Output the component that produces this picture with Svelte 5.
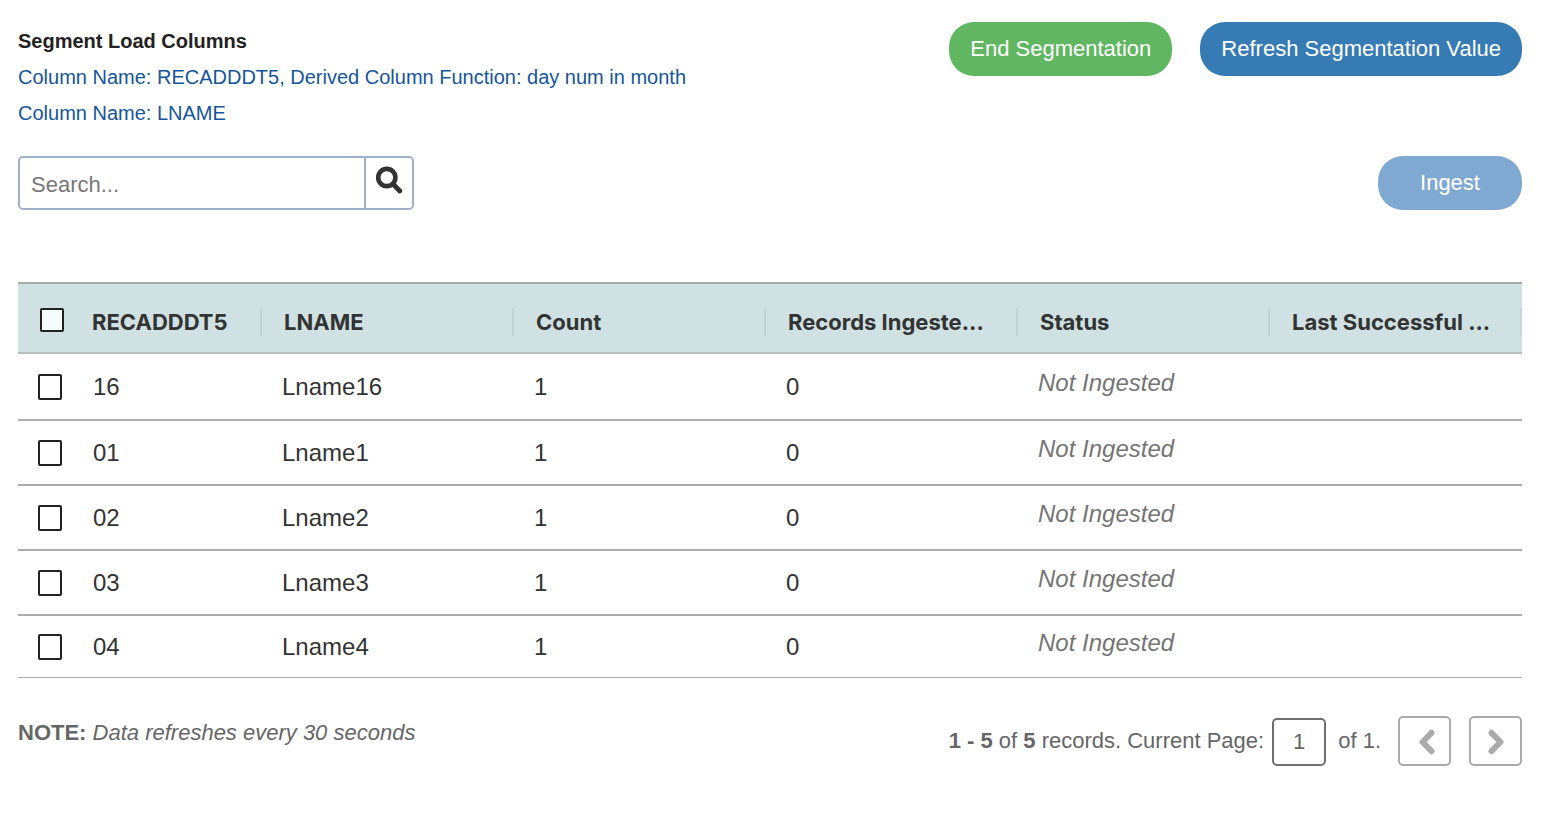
<script>
  const columns = ['LNAME', 'Count', 'Records Ingeste...', 'Status', 'Last Successful ...'];
  const rows = [
    { day: '16', name: 'Lname16', count: 1, ingested: 0, status: 'Not Ingested', last: '' },
    { day: '01', name: 'Lname1', count: 1, ingested: 0, status: 'Not Ingested', last: '' },
    { day: '02', name: 'Lname2', count: 1, ingested: 0, status: 'Not Ingested', last: '' },
    { day: '03', name: 'Lname3', count: 1, ingested: 0, status: 'Not Ingested', last: '' },
    { day: '04', name: 'Lname4', count: 1, ingested: 0, status: 'Not Ingested', last: '' }
  ];
  let search = $state('');
  let page = $state('1');
  let selected = $state(rows.map(() => false));

  function toggleAll(event) {
    selected = rows.map(() => event.currentTarget.checked);
  }
</script>

<main>
  <header class="top">
    <section class="segments">
      <h1>Segment Load Columns</h1>
      <p>Column Name: RECADDDT5, Derived Column Function: day num in month</p>
      <p>Column Name: LNAME</p>
    </section>
    <div class="actions">
      <button class="pill green">End Segmentation</button>
      <button class="pill">Refresh Segmentation Value</button>
    </div>
  </header>

  <div class="tools">
    <form class="search" onsubmit={(e) => e.preventDefault()}>
      <input type="text" placeholder="Search..." aria-label="Search" bind:value={search} />
      <button aria-label="Run search">
        <svg width="28" height="28" viewBox="0 0 28 28" fill="none" stroke="#333" aria-hidden="true">
          <circle cx="11.8" cy="11.5" r="8.6" stroke-width="4.6" />
          <path d="M18 18 L24.8 25" stroke-width="4.8" stroke-linecap="round" />
        </svg>
      </button>
    </form>
    <button class="pill ingest" disabled>Ingest</button>
  </div>

  <table>
    <colgroup>
      <col class="pick-col" />
      <col class="day-col" />
      {#each columns as column (column)}<col />{/each}
    </colgroup>
    <thead>
      <tr>
        <th class="pick"><input type="checkbox" aria-label="Select all rows" onchange={toggleAll} /></th>
        <th class="day"><span>RECADDDT5</span></th>
        {#each columns as column (column)}
          <th><span>{column}</span></th>
        {/each}
      </tr>
    </thead>
    <tbody>
      {#each rows as row, i (row.day)}
        <tr>
          <td class="pick"><input type="checkbox" aria-label={row.name} bind:checked={selected[i]} /></td>
          <td class="day">{row.day}</td>
          <td>{row.name}</td>
          <td>{row.count}</td>
          <td>{row.ingested}</td>
          <td class="status">{row.status}</td>
          <td>{row.last}</td>
        </tr>
      {/each}
    </tbody>
  </table>

  <footer>
    <p class="note"><strong>NOTE:</strong> <em>Data refreshes every 30 seconds</em></p>
    <div class="pager">
      <label for="page"><strong>1 - 5</strong> of <strong>5</strong> records. Current Page:</label>
      <input id="page" type="text" bind:value={page} />
      <span>of 1.</span>
      <div class="steps">
        <button aria-label="Previous page">
          <svg width="20" height="28" viewBox="0 0 20 28" aria-hidden="true"><path d="M16.5 5.8 L7.5 15 L16.5 24.2" /></svg>
        </button>
        <button aria-label="Next page">
          <svg width="20" height="28" viewBox="0 0 20 28" aria-hidden="true"><path d="M5.5 5.8 L14.5 15 L5.5 24.2" /></svg>
        </button>
      </div>
    </div>
  </footer>
</main>

<style>
  :global(body) {
    margin: 0;
    background: #fff;
  }
  main {
    padding: 22px 28px 48px 18px;
    font-family: 'Liberation Sans', Arial, sans-serif;
    font-size: 22px;
    color: #333;
  }
  h1,
  p {
    margin: 0;
  }
  button,
  input {
    box-sizing: border-box;
    margin: 0;
    font: inherit;
  }
  button {
    cursor: pointer;
  }
  .top,
  .tools,
  footer {
    display: flex;
    justify-content: space-between;
    align-items: flex-start;
  }
  .segments {
    padding-top: 1px;
    font-size: 20px;
    line-height: 36px;
    color: #15569a;
  }
  h1 {
    font-size: 20px;
    color: #222;
  }
  .actions {
    display: flex;
    gap: 28px;
  }
  .pill {
    height: 54px;
    padding: 0 21px;
    min-width: 144px;
    border: 0;
    border-radius: 25px;
    background: #377bb5;
    color: #fff;
    white-space: nowrap;
  }
  .green {
    background: #61b761;
  }
  .ingest {
    background: #7fa9d0;
    cursor: default;
  }
  .tools {
    margin-top: 25px;
  }
  .search {
    display: flex;
    box-sizing: border-box;
    width: 396px;
    height: 54px;
    border: 2px solid #9fb1c7;
    border-radius: 5px;
  }
  .search input {
    flex: 1;
    min-width: 0;
    padding: 4px 11px 0;
    border: 0;
    background: none;
    color: #333;
  }
  .search input::placeholder {
    color: #777;
    opacity: 1;
  }
  .search button {
    width: 48px;
    padding: 0 0 6px;
    border: 0;
    border-left: 2px solid #9fb1c7;
    background: none;
    display: grid;
    place-items: center;
  }
  table {
    width: 100%;
    margin-top: 72px;
    table-layout: fixed;
    border-spacing: 0;
  }
  .pick-col {
    width: 56px;
  }
  .day-col {
    width: 188px;
  }
  th,
  td {
    box-sizing: border-box;
    text-align: left;
    white-space: nowrap;
  }
  th {
    height: 72px;
    padding: 8px 0 0;
    border-top: 2px solid #a9abac;
    border-bottom: 2px solid #b9bfc1;
    background: #cfe1e3;
    font-family: Inter, Roboto, sans-serif;
    font-size: 22px;
    font-weight: 700;
  }
  th span {
    display: block;
    padding: 0 22px;
    border-right: 2px solid #c3d3d3;
    line-height: 28px;
  }
  th.day span {
    padding-left: 18px;
  }
  td {
    height: 65px;
    padding: 0 20px;
    border-bottom: 2px solid #adadad;
    font-size: 24px;
  }
  tbody tr:first-child td {
    height: 67px;
  }
  tbody tr:last-child td {
    height: 62px;
    border-bottom-width: 1px;
  }
  td.day {
    padding-left: 19px;
  }
  td.status {
    padding-bottom: 8px;
    font-style: italic;
    color: #757575;
  }
  th.pick {
    padding: 4px 0 0 22px;
  }
  td.pick {
    padding: 0 0 0 20px;
  }
  .pick input {
    appearance: none;
    display: block;
    width: 24px;
    height: 24px;
    border: 2px solid #222;
    border-radius: 2px;
    background: #fff;
  }
  td.pick input {
    height: 26px;
  }
  .pick input:checked {
    background: #377bb5;
  }
  th.pick input {
    background: #f6fbfc;
  }
  footer {
    margin-top: 38px;
    color: #666;
  }
  .note {
    line-height: 34px;
  }
  .pager {
    display: flex;
    align-items: center;
    gap: 8px;
    line-height: 50px;
  }
  .pager input {
    width: 54px;
    height: 48px;
    margin: 2px 4px 0 0;
    padding: 0;
    border: 2px solid #707070;
    border-radius: 5px;
    background: #fff;
    color: #666;
    text-align: center;
  }
  .steps {
    display: flex;
    gap: 18px;
    margin-left: 9px;
  }
  .steps button {
    display: grid;
    place-items: center;
    width: 53px;
    height: 50px;
    padding: 0;
    border: 2px solid #ababab;
    border-radius: 5px;
    background: #fff;
  }
  .steps path {
    fill: none;
    stroke: #ababab;
    stroke-width: 6;
    stroke-linecap: round;
    stroke-linejoin: round;
  }
</style>
